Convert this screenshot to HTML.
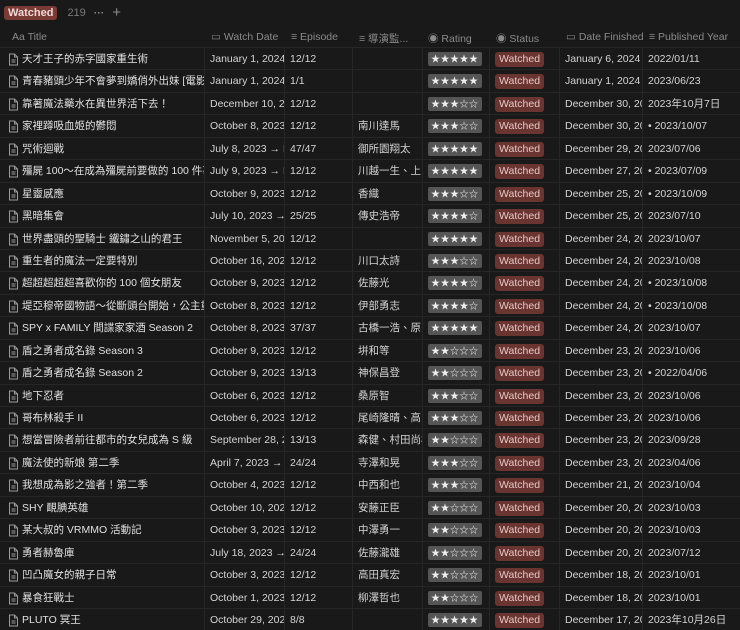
<!DOCTYPE html>
<html><head><meta charset="utf-8"><style>
*{margin:0;padding:0;box-sizing:border-box}
body{width:740px;height:629px;background:#191919;overflow:hidden;font-family:"Liberation Sans","Noto Sans CJK TC",sans-serif;font-size:10.5px;color:#d4d4d4;position:relative}
.top{position:absolute;left:4px;top:4px;height:17px;display:flex;align-items:center;gap:8px}
.tag{background:#7a3a36;color:#f0d8d6;font-size:11px;padding:1px 4px;border-radius:3px;font-weight:bold}
.cnt{color:#7a7a7a;font-size:11px;margin-left:2px}
.hdr{position:absolute;top:25px;left:0;width:740px;height:22px;color:#8a8a8a;font-size:10.5px}
.hdr div{position:absolute;top:6px;white-space:nowrap}
.row{position:absolute;left:0;width:740px;height:22.44px;border-top:1px solid #262626}
.c{position:absolute;top:0;height:100%;white-space:nowrap;overflow:hidden;line-height:23px;border-right:1px solid #262626;padding-left:5px}
.t{left:0;width:205px;padding-left:22px;color:#e0e0e0}
.t svg{position:absolute;left:8px;top:5px}
.w{left:205px;width:80px}
.e{left:285px;width:68px}
.d{left:353px;width:70px}
.r{left:423px;width:67px}
.s{left:490px;width:70px}
.f{left:560px;width:83px}
.p{left:643px;width:97px;border-right:none}
.st{display:inline-block;background:#555;color:#eee;font-size:9px;line-height:14px;padding:0 3px;border-radius:2px;letter-spacing:0.5px;margin-top:4px;vertical-align:top}
.wa{display:inline-block;background:#6a3430;color:#e4c8c5;font-size:10.5px;line-height:15px;padding:0 4px;border-radius:3px;margin-top:4px;vertical-align:top}
</style></head><body>
<div class="top"><span class="tag">Watched</span><span class="cnt">219</span><span style="color:#8a8a8a;font-weight:bold">···</span><span style="color:#8a8a8a;font-size:15px">+</span></div>
<div class="hdr">
<div style="left:12px">Aa Title</div>
<div style="left:211px">▭ Watch Date</div>
<div style="left:291px">≡ Episode</div>
<div style="left:359px">≡ 導演監...</div>
<div style="left:428px">◉ Rating</div>
<div style="left:496px">◉ Status</div>
<div style="left:566px">▭ Date Finished</div>
<div style="left:649px">≡ Published Year</div>
</div>
<div id="rows"></div>
<script>
const D=[
["天才王子的赤字國家重生術","January 1, 2024 →","12/12","",5,"January 6, 2024","2022/01/11"],
["青春豬頭少年不會夢到嬌俏外出妹 [電影]","January 1, 2024 →","1/1","",5,"January 1, 2024","2023/06/23"],
["靠著魔法藥水在異世界活下去！","December 10, 202","12/12","",3,"December 30, 202","2023年10月7日"],
["家裡蹲吸血姬的鬱悶","October 8, 2023 →","12/12","南川達馬",3,"December 30, 202","• 2023/10/07"],
["咒術迴戰","July 8, 2023 → De","47/47","御所園翔太",5,"December 29, 202","2023/07/06"],
["殭屍 100～在成為殭屍前要做的 100 件事～","July 9, 2023 → De","12/12","川越一生、上田",5,"December 27, 202","• 2023/07/09"],
["星靈感應","October 9, 2023 →","12/12","香織",3,"December 25, 202","• 2023/10/09"],
["黑暗集會","July 10, 2023 → D","25/25","傳史浩帝",4,"December 25, 202","2023/07/10"],
["世界盡頭的聖騎士 鐵鏽之山的君王","November 5, 202","12/12","",5,"December 24, 202","2023/10/07"],
["重生者的魔法一定要特別","October 16, 2023","12/12","川口太詩",3,"December 24, 202","2023/10/08"],
["超超超超超喜歡你的 100 個女朋友","October 9, 2023 →","12/12","佐藤光",4,"December 24, 202","• 2023/10/08"],
["堤亞穆帝國物語～從斷頭台開始，公主重生","October 8, 2023 →","12/12","伊部勇志",4,"December 24, 202","• 2023/10/08"],
["SPY x FAMILY 間諜家家酒 Season 2","October 8, 2023 →","37/37","古橋一浩、原田",5,"December 24, 202","2023/10/07"],
["盾之勇者成名錄 Season 3","October 9, 2023 →","12/12","垪和等",2,"December 23, 202","2023/10/06"],
["盾之勇者成名錄 Season 2","October 9, 2023 →","13/13","神保昌登",2,"December 23, 202","• 2022/04/06"],
["地下忍者","October 6, 2023 →","12/12","桑原智",3,"December 23, 202","2023/10/06"],
["哥布林殺手 II","October 6, 2023 →","12/12","尾崎隆晴、高田",3,"December 23, 202","2023/10/06"],
["想當冒險者前往都市的女兒成為 S 級","September 28, 20","13/13","森健、村田尚樹",2,"December 23, 202","2023/09/28"],
["魔法使的新娘 第二季","April 7, 2023 → De","24/24","寺澤和晃",3,"December 23, 202","2023/04/06"],
["我想成為影之強者！第二季","October 4, 2023 →","12/12","中西和也",3,"December 21, 202","2023/10/04"],
["SHY 靦腆英雄","October 10, 2023","12/12","安藤正臣",2,"December 20, 202","2023/10/03"],
["某大叔的 VRMMO 活動記","October 3, 2023 →","12/12","中澤勇一",2,"December 20, 202","2023/10/03"],
["勇者赫魯庫","July 18, 2023 → D","24/24","佐藤瀧雄",2,"December 20, 202","2023/07/12"],
["凹凸魔女的親子日常","October 3, 2023 →","12/12","高田真宏",2,"December 18, 202","2023/10/01"],
["暴食狂戰士","October 1, 2023 →","12/12","柳澤哲也",2,"December 18, 202","2023/10/01"],
["PLUTO 冥王","October 29, 2023","8/8","",5,"December 17, 202","2023年10月26日"]];
const icon='<svg width="11" height="13" viewBox="0 0 11 13"><path d="M1.5 1h5l3 3v8h-8z M6.5 1v3h3 M3.5 7h4 M3.5 9h4" fill="none" stroke="#9a9a9a" stroke-width="1"/></svg>';
let h='';
D.forEach((r,i)=>{const y=47+i*22.44;
const st='★'.repeat(r[4])+'☆'.repeat(5-r[4]);
h+=`<div class="row" style="top:${y}px"><div class="c t">${icon}${r[0]}</div><div class="c w">${r[1]}</div><div class="c e">${r[2]}</div><div class="c d">${r[3]}</div><div class="c r"><span class="st">${st}</span></div><div class="c s"><span class="wa">Watched</span></div><div class="c f">${r[5]}</div><div class="c p">${r[6]}</div></div>`;});
document.getElementById('rows').innerHTML=h;
</script>
</body></html>
